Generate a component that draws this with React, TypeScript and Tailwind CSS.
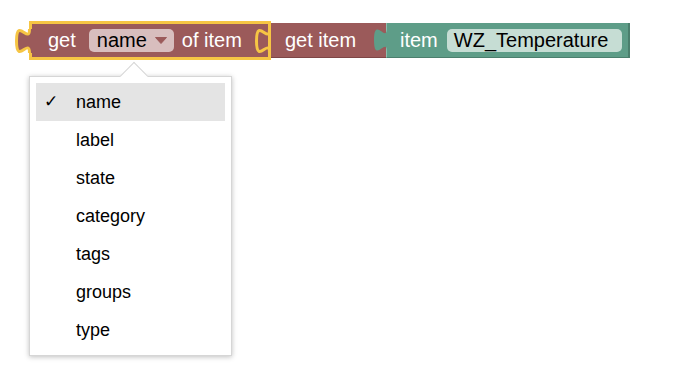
import React from "react";

const MAROON = "#9b5a5a";
const GREEN = "#5e9d88";
const YELLOW = "#f6c544";

// puzzle tab curve, bulging left from x=ox, height 24
const tabCurve = (ox: number) =>
  `M${ox},0 c0,16 -13,-12.8 -13,12 s13,-4 13,12`;

const OutputTab: React.FC = () => (
  <svg
    className="absolute left-[-19px] top-[4px]"
    width="23"
    height="26"
    viewBox="0 0 23 26"
  >
    <g transform="translate(0,1)">
      <path d={`${tabCurve(16.5)} L20,24 L20,0 Z`} fill={MAROON} />
      <path d={tabCurve(16.5)} fill="none" stroke={YELLOW} strokeWidth="3" />
    </g>
  </svg>
);

const InputNotch: React.FC = () => (
  <svg
    className="absolute right-[-3px] top-[4px]"
    width="20"
    height="26"
    viewBox="0 0 20 26"
  >
    <g transform="translate(0,1)">
      <path d={tabCurve(18.5)} fill="none" stroke={YELLOW} strokeWidth="3" />
    </g>
  </svg>
);

const GreenTab: React.FC = () => (
  <svg
    className="absolute left-[-15px] top-[5px]"
    width="16"
    height="24"
    viewBox="0 0 16 24"
  >
    <path d={`${tabCurve(15)} L16,24 L16,0 Z`} fill={GREEN} />
  </svg>
);

const menuItems = ["name", "label", "state", "category", "tags", "groups", "type"];

export default function App() {
  return (
    <div
      className="relative w-[700px] h-[386px] bg-white overflow-hidden"
      style={{ fontFamily: '"Liberation Sans", Arial, sans-serif' }}
    >
      <div className="flex items-center pt-[21px] pl-[29px] text-[20px] text-white">
        {/* get name of item */}
        <div className="relative flex items-center h-[39px] w-[242px] border-[3px] border-[#f6c544] bg-[#9b5a5a] pl-[16px]">
          <OutputTab />
          <span className="leading-[23px]">get</span>
          <div className="ml-[13px] flex items-center h-[23px] w-[85px] rounded-[5px] bg-[#d8bebe] pl-[8px]">
            <span className="leading-[23px] text-black">name</span>
            <svg className="ml-[8px]" width="12" height="7" viewBox="0 0 12 7">
              <path d="M0.5,0.5 L11.5,0.5 L6,6.5 Z" fill={MAROON} strokeLinejoin="round" stroke={MAROON} />
            </svg>
          </div>
          <span className="ml-[8px] leading-[23px]">of item</span>
          <InputNotch />
        </div>

        {/* get item */}
        <div className="flex items-center h-[35px] w-[115px] bg-[#9b5a5a] border-b border-[#7e4646] pl-[14px]">
          <span className="leading-[23px]">get item</span>
        </div>

        {/* item WZ_Temperature */}
        <div className="relative flex items-center h-[35px] w-[244px] bg-[#5e9d88] border-l border-l-[#8dbfae] border-r-2 border-b border-r-[#4b7f6d] border-b-[#4b7f6d] pl-[13px]">
          <GreenTab />
          <span className="leading-[23px]">item</span>
          <div className="ml-[9px] flex items-center h-[23px] w-[175px] rounded-[5px] bg-[#c6ddd4] pl-[7px]">
            <span className="leading-[23px] text-black">WZ_Temperature</span>
          </div>
        </div>
      </div>

      {/* dropdown menu */}
      <div className="absolute left-[29px] top-[76px] w-[203px] h-[280px] bg-white border border-[#d6d6d6] shadow-[0_1px_5px_rgba(0,0,0,0.25)] p-[6px]">
        <div className="absolute left-[94px] top-[-11px] w-[20px] h-[20px] rotate-45 bg-white border-l border-t border-[#d6d6d6]" />
        <div className="relative flex flex-col">
          {menuItems.map((item, i) => (
            <div
              key={item}
              className={`relative flex items-center h-[38px] pl-[40px] text-[18px] text-black ${
                i === 0 ? "bg-[#e4e4e4]" : ""
              }`}
            >
              {i === 0 && (
                <span
                  className="absolute left-[8px] text-[17px]"
                  style={{ fontFamily: '"DejaVu Sans", sans-serif' }}
                >
                  ✓
                </span>
              )}
              {item}
            </div>
          ))}
        </div>
      </div>
    </div>
  );
}
